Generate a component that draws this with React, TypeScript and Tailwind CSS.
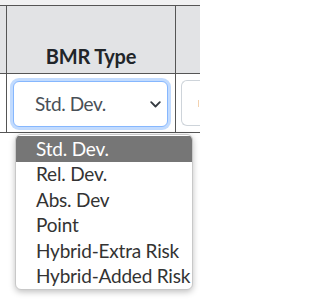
import React from "react";

const options = [
  "Std. Dev.",
  "Rel. Dev.",
  "Abs. Dev",
  "Point",
  "Hybrid-Extra Risk",
  "Hybrid-Added Risk",
];

const App = () => {
  return (
    <div
      className="relative w-[200px] h-[300px] overflow-hidden bg-white"
      style={{ fontFamily: "Lato, 'Noto Sans', sans-serif" }}
    >
      <div className="h-[6px] bg-[#f1f1f2] border-b border-[#555]" />
      {/* header row */}
      <div className="flex h-[68px] bg-[#e2e3e5] border-b border-[#555]">
        <div className="w-[7px] shrink-0 border-r border-[#555]" />
        <div className="w-[169px] shrink-0 border-r border-[#555] flex items-end justify-center pb-[7px]">
          <span className="text-[20px] font-bold text-[#212529] leading-none tracking-[-0.2px]">
            BMR Type
          </span>
        </div>
        <div className="flex-1" />
      </div>
      {/* body row */}
      <div className="flex h-[59px] border-b border-[#555]">
        <div className="w-[7px] shrink-0 border-r border-[#555]" />
        <div className="w-[169px] shrink-0 border-r border-[#555] pl-[6px] pr-[7px] pt-[7px]">
          <div className="h-[46px] rounded-[6px] border border-[#86b7fe] bg-white shadow-[0_0_0_3px_rgba(13,110,253,0.25)] flex items-center justify-between pl-[21px] pr-[6px]">
            <span className="text-[19px] text-[#495057] tracking-[-0.4px] pt-[1px]">Std. Dev.</span>
            <svg
              width="11"
              height="7"
              viewBox="0 0 11 7"
              fill="none"
              stroke="#343a40"
              strokeWidth="1.8"
              strokeLinecap="round"
              strokeLinejoin="round"
            >
              <path d="M1.2 1.2l4.3 4.3 4.3-4.3" />
            </svg>
          </div>
        </div>
        <div className="flex-1 pl-[5px] pt-[6px]">
          <div className="h-[46px] rounded-l-[6px] border border-[#ced4da] bg-white border-r-0 flex items-center pl-[16px]">
            <span className="w-[1px] h-[7px] bg-[#f3d2b0]" />
          </div>
        </div>
      </div>
      {/* dropdown */}
      <div className="absolute left-[15px] top-[134px] w-[178px] h-[156px] bg-white rounded-[6px] border border-[#c8c8c8] shadow-[0_2px_6px_rgba(0,0,0,0.25)] overflow-hidden pt-[1px]">
        {options.map((o, i) => (
          <div
            key={o}
            className={
              i === 0
                ? "h-[25.5px] flex items-center pl-[20px] text-[19px] tracking-[-0.2px] text-white bg-[#767676] whitespace-nowrap"
                : "h-[25.5px] flex items-center pl-[20px] text-[19px] tracking-[-0.2px] text-[#333] whitespace-nowrap"
            }
          >
            {o}
          </div>
        ))}
      </div>
    </div>
  );
};

export default App;
